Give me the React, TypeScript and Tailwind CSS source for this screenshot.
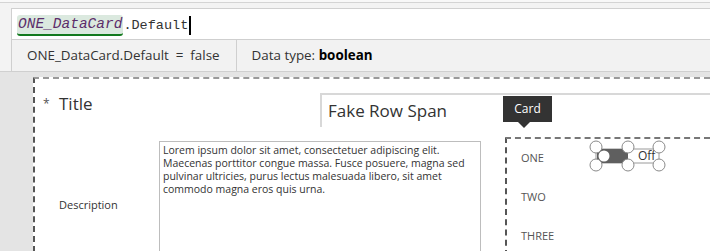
import React from "react";

const ui = { fontFamily: '"Open Sans", "Noto Sans", sans-serif' };
const mono = { fontFamily: '"Liberation Mono", "DejaVu Sans Mono", monospace' };

function ToggleSelection() {
  // selected toggle control with resize handles
  const handles = [
    [7, 7], [39, 7], [70, 7],
    [7, 25], [39, 25], [70, 25],
  ];
  return (
    <svg width="80" height="34" viewBox="0 0 80 34" className="absolute left-[82px] top-[1px]">
      <rect x="7" y="9" width="63" height="14" fill="none" stroke="#9a9a9a" strokeWidth="1" />
      <rect x="8" y="9" width="31" height="14" fill="#5f5f5f" />
      <circle cx="15" cy="16" r="5.5" fill="#ffffff" />
      <text x="49" y="20" fontSize="12" fill="#333" style={ui}>Off</text>
      {handles.map(([cx, cy], i) => (
        <circle key={i} cx={cx} cy={cy} r="6" fill="#ffffff" stroke="#8a8a8a" strokeWidth="1" />
      ))}
    </svg>
  );
}

export default function App() {
  return (
    <div className="relative w-[710px] h-[251px] overflow-hidden bg-[#f3f3f3]" style={ui}>
      {/* top strip */}
      <div className="h-[3px] bg-[#f8f8f8] border-b border-[#d4d4d4]" />
      <div className="h-[5px]" />

      <div className="flex">
        <div className="w-[11px] shrink-0 border-b border-[#d0d0d0]" />
        <div className="flex-1 flex flex-col">
          {/* formula bar */}
          <div className="h-[31px] bg-white border-l border-t border-[#d0d0d0] flex items-center pl-[5px] pt-[2px]">
            <span
              className="italic text-[14.5px] text-[#5b2d6a] bg-[#dbe9df] rounded-[3px] border-b-2 border-[#127a1e] px-[1px] leading-[19px]"
              style={mono}
            >
              ONE_DataCard
            </span>
            <span className="text-[13.5px] text-[#333] leading-[19px]" style={mono}>.Default</span>
            <span className="w-[2px] h-[19px] bg-black ml-[1px]" />
          </div>
          {/* result bar */}
          <div className="h-[33px] bg-[#f2f2f2] border-t border-b border-l border-[#cfcfcf] flex items-center text-[13.4px] text-[#333]">
            <div className="pl-[15px] pr-[16px] h-full flex items-center border-r border-[#cfcfcf] whitespace-pre">
              {"ONE_DataCard.Default  =  false"}
            </div>
            <div className="pl-[15px]">
              Data type: <span className="font-bold text-black">boolean</span>
            </div>
          </div>
        </div>
      </div>

      {/* canvas */}
      <div className="bg-[#e4e4e4] pl-[33px] pt-[5px] h-[180px]">
        <div className="relative bg-white h-full border-l-2 border-t-2 border-dashed border-l-[#555] border-t-[#9a9a9a] flex flex-col">
          {/* title row */}
          <div className="flex items-start pt-[14px]">
            <div className="w-[285px] shrink-0 flex items-center pl-[8px] h-[22px]">
              <span className="text-[12px] text-[#555] w-[16px]">*</span>
              <span className="text-[17px] text-[#333]">Title</span>
            </div>
            <div className="flex-1 h-[34px] border-t-2 border-l-2 border-[#d8d8d8] flex items-center pl-[6px] text-[17px] text-[#333] whitespace-nowrap">
              Fake Row Span
            </div>
          </div>

          {/* description row */}
          <div className="flex mt-[10px] flex-1">
            <div className="w-[124px] shrink-0 pl-[24px] pt-[60px] text-[11px] text-[#333]">
              Description
            </div>
            <div className="w-[322px] shrink-0 mt-[4px] border border-[#bdbdbd] px-[3px] pt-[2px] text-[10.5px] leading-[13px] text-[#333] whitespace-nowrap">
              <div>Lorem ipsum dolor sit amet, consectetuer adipiscing elit.</div>
              <div>Maecenas porttitor congue massa. Fusce posuere, magna sed</div>
              <div>pulvinar ultricies, purus lectus malesuada libero, sit amet</div>
              <div>commodo magna eros quis urna.</div>
            </div>
            <div className="relative ml-[24px] flex-1 border-l-2 border-t-2 border-dashed border-l-[#555] border-t-[#777] flex flex-col pl-[14px] text-[11px] text-[#555]">
              <div className="h-[39px] flex items-center">ONE</div>
              <div className="h-[39px] flex items-center">TWO</div>
              <div className="h-[39px] flex items-center">THREE</div>
              <ToggleSelection />
            </div>
          </div>
        </div>
      </div>

      {/* card tooltip */}
      <div className="absolute left-[503px] top-[96px] flex flex-col items-center">
        <div className="w-[49px] h-[26px] bg-[#333333] text-white text-[12px] flex items-center justify-center">
          Card
        </div>
        <div className="w-0 h-0 border-l-[7px] border-r-[7px] border-t-[7px] border-l-transparent border-r-transparent border-t-[#333333] -mt-[1px] mr-[8px]" />
      </div>
    </div>
  );
}
